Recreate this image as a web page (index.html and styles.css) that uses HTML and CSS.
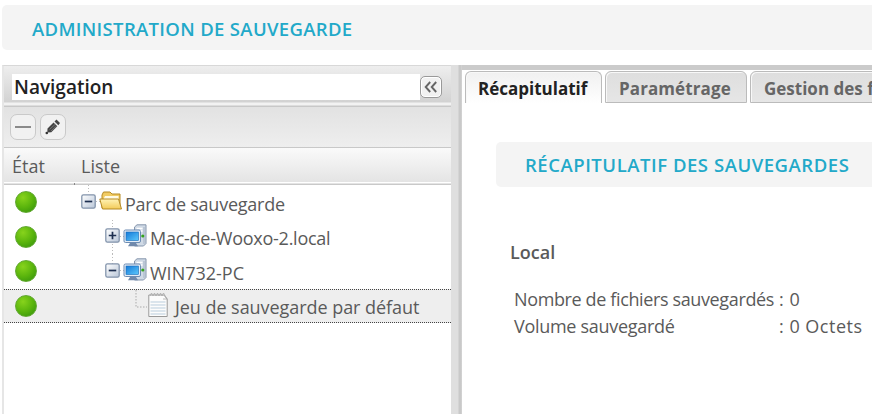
FILE: index.html
```html
<!DOCTYPE html>
<html lang="fr">
<head>
<meta charset="utf-8">
<title>Administration de sauvegarde</title>
<link rel="stylesheet" href="styles.css">
</head>
<body>
<svg width="0" height="0" class="defs" aria-hidden="true">
  <defs>
    <linearGradient id="folder" x1="0" y1="0" x2="0" y2="1"><stop offset="0" stop-color="#fff3b5"/><stop offset="1" stop-color="#f3cb58"/></linearGradient>
    <linearGradient id="screen" x1="0" y1="0" x2="1" y2="1"><stop offset="0" stop-color="#1479d8"/><stop offset="1" stop-color="#5cc8fb"/></linearGradient>
    <linearGradient id="box" x1="0" y1="0" x2="1" y2="1"><stop offset="0" stop-color="#fff"/><stop offset="1" stop-color="#b9c6d8"/></linearGradient>
    <symbol id="minus" viewBox="0 0 14 14"><rect x=".75" y=".75" width="12.5" height="12.5" rx="1.5" fill="url(#box)" stroke="#8293ab" stroke-width="1.2"/><path d="M3.5 7h7" stroke="#1d2f50" stroke-width="1.6"/></symbol>
    <symbol id="plus" viewBox="0 0 14 14"><rect x=".75" y=".75" width="12.5" height="12.5" rx="1.5" fill="url(#box)" stroke="#8293ab" stroke-width="1.2"/><path d="M3.5 7h7M7 3.5v7" stroke="#1d2f50" stroke-width="1.6"/></symbol>
    <symbol id="pc" viewBox="0 0 24 24"><path d="M11.5 3 14 .8h9v18.700L20.500 22h-9z" fill="#d0dae6" stroke="#8596ad"/><path d="M13.500 4.500h6M13.500 7h6" stroke="#fff" stroke-width="1.300"/><path d="M21 3v17" stroke="#a4b2c4"/><circle cx="19.800" cy="12" r="1.600" fill="#35a51c"/><rect x="1" y="6" width="16.500" height="12.500" rx="1.500" fill="#e4edf6" stroke="#6c8bb2"/><rect x="3" y="8" width="12.500" height="8.500" fill="url(#screen)" stroke="#1769b8" stroke-width=".6"/><path d="M7 19h6l2 3.300H5z" fill="#7089ab"/></symbol>
  </defs>
</svg>
<div class="app">
  <h1 class="banner"><span class="t-main">ADMINISTRATION DE SAUVEGARDE</span></h1>
  <div class="workspace">
    <section class="nav">
      <header class="nav-head"><h2 class="nav-title"><span>Navigation</span></h2>
        <button class="btn collapse" aria-label="Réduire"><svg width="16" height="14" viewBox="0 0 16 14"><path d="M7.200 2 2.700 7l4.500 5M13.200 2 8.700 7l4.500 5" fill="none" stroke="#666" stroke-width="1.900"/></svg></button>
      </header>
      <div class="toolbar">
        <button class="btn tool" aria-label="Supprimer"><svg width="18" height="18" viewBox="0 0 18 18"><path d="M1 9h16" stroke="#8a8a8a" stroke-width="2"/></svg></button>
        <button class="btn tool" aria-label="Modifier"><svg width="18" height="18" viewBox="0 0 18 18"><path d="M3.500 10.500 9.500 4.500l3.800 3.800-6 6-4 .2zM10.500 3.500 12.500 1.500l3.500 3.500L14.300 7.300z" fill="#444"/><path d="m5.500 11.500 6-5.500M7 13l6-5.500" stroke="#888" stroke-width=".7"/><circle cx="2.800" cy="15" r="1.300" fill="#333"/></svg></button>
      </div>
      <div class="cols"><span class="c1">État</span><span class="c2">Liste</span></div>
      <div class="row"><i class="dot"></i><div class="node n1"><svg class="tog" width="15" height="15"><use href="#minus"/></svg><svg class="ico" width="24" height="24" viewBox="0 0 24 24"><path d="M3 19V6l1.500-3h6.500L13 5h8v14z" fill="#f1cb62" stroke="#b58a25"/><path d="M5 9 6 7h13.500v5H5z" fill="#fffbe5"/><path d="M.8 10h18.700l3 10H3.500z" fill="url(#folder)" stroke="#b58a25"/></svg><span class="l1">Parc de sauvegarde</span></div></div>
      <div class="row"><i class="dot"></i><div class="node n2"><svg class="tog" width="15" height="15"><use href="#plus"/></svg><svg class="ico" width="24" height="24"><use href="#pc"/></svg><span class="l2">Mac-de-Wooxo-2.local</span></div></div>
      <div class="row"><i class="dot"></i><div class="node n2 end"><svg class="tog" width="15" height="15"><use href="#minus"/></svg><svg class="ico" width="24" height="24"><use href="#pc"/></svg><span class="l3">WIN732-PC</span></div></div>
      <div class="row selected"><i class="dot"></i><div class="node n3"><svg class="elbow" width="12" height="20" viewBox="0 0 12 20"><path d="M1 0v17h11" fill="none" stroke="#aaa" stroke-dasharray="1.500 1.500"/></svg><svg class="doc" width="20" height="26" viewBox="0 0 20 26"><path d="M.8 3h15l3.400 4v17.500H.8z" fill="#fcfcfc" stroke="#999"/><path d="M2.500 10h15M2.500 13h15M2.500 16h15M2.500 19h15M2.500 22h15" stroke="#b9cddd"/><path d="m2 4 1.500-3L5 4l1.500-3L8 4l1.500-3L11 4l1.500-3L14 4l1.500-3 3.500 6h-4" fill="none" stroke="#aaa" stroke-width=".8"/></svg><span class="l4">Jeu de sauvegarde par défaut</span></div></div>
    </section>
    <div class="splitter"></div>
    <main class="content">
      <nav class="tabs"><span class="tab active"><b class="b1">Récapitulatif</b></span><span class="tab"><b class="b2">Paramétrage</b></span><span class="tab last"><b class="b3">Gestion des f</b></span></nav>
      <h2 class="banner sub"><span class="t-sub">RÉCAPITULATIF DES SAUVEGARDES</span></h2>
      <h3 class="local"><span>Local</span></h3>
      <dl class="stats">
        <dt><span class="s1">Nombre de fichiers sauvegardés</span></dt><dd><span class="v1">: 0</span></dd>
        <dt><span class="s2">Volume sauvegardé</span></dt><dd><span class="v2">: 0 Octets</span></dd>
      </dl>
    </main>
  </div>
</div>
</body>
</html>
```
FILE: styles.css
```css
* { box-sizing: border-box; }
body { margin: 0; background: #fff; color: #5a5a5a; font: 18px/24px "Open Sans", sans-serif; overflow: hidden; }
h1, h2, h3, dl, dd { margin: 0; }
.defs { position: absolute; }
.app { width: 872px; height: 414px; padding: 5px 0 0 2px; overflow: hidden; white-space: nowrap; }
.banner { height: 45px; padding-left: 30px; border-radius: 5px 0 0 5px; background: #f4f4f4; color: #22a9c9; font-size: 18.500px; font-weight: 600; line-height: 47px; }
.t-main { letter-spacing: .33px; }
.t-sub { letter-spacing: .54px; }
.workspace { display: flex; height: 349px; margin-top: 15px; }
.nav { flex: none; width: 449px; border-left: 2px solid #e6e6e6; border-top: 1px solid #d8d8d8; }
.nav-head { display: flex; align-items: center; height: 41px; padding: 0 9px 0 8px; background: linear-gradient(#eee, #d2d2d2 36px, #f2f2f2 37px, #f2f2f2 39px, #c8c8c8 40px); }
.nav-title { flex: 1; height: 26px; background: #fff; color: #222; font-size: 19px; font-weight: 600; line-height: 26px; padding-left: 2px; }
.btn { display: flex; align-items: center; justify-content: center; padding: 0; border: 1px solid #bbb; border-radius: 5px; background: #f1f1f1; }
.collapse { width: 22px; height: 22px; border-color: #999; box-shadow: inset 0 0 0 1px #fff; }
.toolbar { display: flex; gap: 4px; align-items: center; height: 41px; padding-left: 6px; background: linear-gradient(#e2e2e2, #eee); border-bottom: 1px solid #c8c8c8; }
.tool { width: 26px; height: 26px; border-color: #c9c9c9; border-radius: 7px; }
.cols { display: flex; height: 37px; padding-left: 8px; line-height: 37px; background: linear-gradient(#888, #888) 70px 35px / 1px 2px no-repeat, linear-gradient(#fafafa, #e4e4e4 34px, #fff 34px, #fff 35px, #c9c9c9 36px); }
.c1 { width: 69px; }
.row { display: flex; align-items: center; height: 34.500px; padding-left: 11px; }
.dot { flex: none; width: 22px; height: 22px; border-radius: 50%; background: radial-gradient(circle at 35% 28%, #87d31c, #5bb50d 50%, #2f8e0c); border: 1px solid #62a832; }
.node { display: flex; align-items: center; height: 100%; background-repeat: no-repeat; }
.n1, .n2 { background-image: repeating-linear-gradient(#bbb 0 1px, transparent 1px 3px), repeating-linear-gradient(90deg, #bbb 0 1px, transparent 1px 3px); }
.n1 { padding-left: 44px; background-size: 1px 9px, 6px 1px; background-position: 51px 0, 59px 16px; }
.n2 { padding-left: 68px; background-size: 1px 100%, 6px 1px; background-position: 75px 0, 83px 16px; }
.n2.end { background-size: 1px 15px, 6px 1px; }
.n3 { padding-left: 98px; }
.tog { margin: -2px 3px 0 0; }
.ico { margin: -2px 3px 0 0; }
.n1 .ico { margin-right: 2px; }
.elbow { margin-top: -12px; }
.doc { margin: -2px 7px 0 1px; }
.node span { padding-top: 3px; }
.l1, .l2 { letter-spacing: -.25px; }
.l4 { letter-spacing: -.05px; }
.selected { background: #eee; border-top: 1px dotted #444; border-bottom: 1px dotted #444; }
.splitter { flex: none; width: 11px; background: linear-gradient(90deg, #dfdfdf 0 7px, #c9c9c9 8px 10px, #d8d8d8); }
.content { flex: 1; min-width: 0; border-top: 5px solid #cbcbcb; overflow: hidden; }
.tabs { display: flex; gap: 3px; height: 33px; padding: 1px 0 0 3px; }
.tab { flex: none; width: 142px; height: 32px; padding-left: 13px; border: 1px solid #bbb; border-radius: 6px 6px 0 0; background: linear-gradient(#dedede, #e6e6e6); color: #666; line-height: 32px; box-shadow: inset 1px 1px #f8f8f8; }
.tab.active { width: 137px; padding-left: 12px; border-bottom: 0; background: linear-gradient(#f0f0f0, #fff); color: #222; }
.tab b { font-weight: 700; font-size: 17px; }
.b2 { letter-spacing: .1px; }
.sub { margin: 39px 0 0 34px; padding-left: 29px; line-height: 45px; }
.local { margin: 53px 0 0 48px; font-size: 18px; font-weight: 600; line-height: 24px; }
.stats { display: grid; grid-template-columns: 265px 1fr; grid-auto-rows: 27px; margin: 22px 0 0 52px; line-height: 27px; }
.s1 { letter-spacing: -.37px; }
.s2 { letter-spacing: -.3px; }
.v1, .v2 { letter-spacing: .5px; }
```
